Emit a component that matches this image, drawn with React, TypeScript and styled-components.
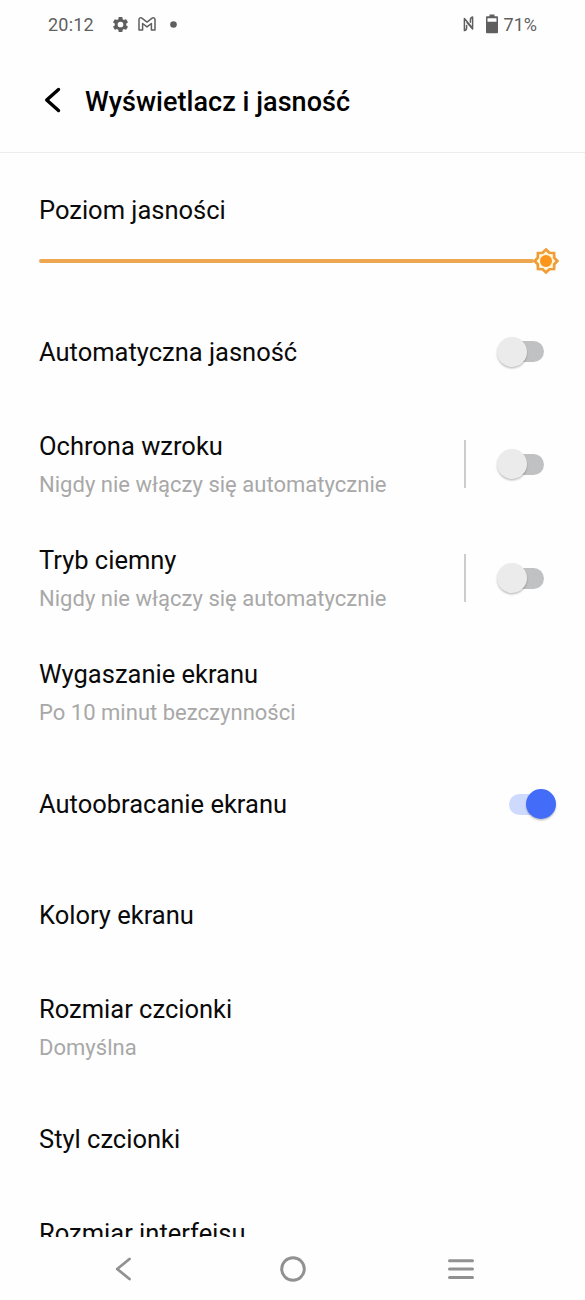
import React from "react";
import styled, { createGlobalStyle } from "styled-components";

const GlobalStyle = createGlobalStyle`
  *, *::before, *::after { box-sizing: border-box; }
  body { margin: 0; background: #fefefe; font-family: Roboto, "Liberation Sans", sans-serif; }
`;

const Screen = styled.div`
  width: 585px;
  height: 1300px;
  display: flex;
  flex-direction: column;
  overflow: hidden;
  background: #fefefe;
  color: #0a0a0a;
`;

const StatusBar = styled.div`
  height: 49px;
  flex: none;
  display: flex;
  align-items: center;
  justify-content: space-between;
  padding: 0 48px;
  color: #5f5f5f;
`;

const StatusGroup = styled.div`
  display: flex;
  align-items: center;
`;

const StatusText = styled.span<{ $spacing?: number; $gap?: number }>`
  margin-left: ${(p) => p.$gap ?? 0}px;
  font-size: 18px;
  line-height: 24px;
  letter-spacing: ${(p) => p.$spacing ?? 0}px;
  white-space: nowrap;
`;

const StatusIcon = styled.svg<{ $gap: number }>`
  display: block;
  flex: none;
  margin-left: ${(p) => p.$gap}px;
  margin-bottom: 1px;
`;

const Header = styled.header`
  height: 104px;
  flex: none;
  display: flex;
  align-items: center;
  padding: 2px 39px 0 43px;
  border-bottom: 1px solid #ececec;
`;

const BackIcon = styled.svg`
  display: block;
  flex: none;
  margin-right: 22px;
  margin-bottom: 3px;
`;

const Heading = styled.h1`
  margin: 0;
  font-size: 27px;
  line-height: 34px;
  font-weight: 500;
  letter-spacing: 0.04px;
  color: #000;
  white-space: nowrap;
`;

const Content = styled.main`
  flex: 1;
  min-height: 0;
  overflow: hidden;
`;

const Brightness = styled.section`
  height: 144px;
  padding: 40px 25px 0 39px;
`;

const Slider = styled.div`
  display: flex;
  align-items: center;
  margin-top: 20px;
`;

const SliderTrack = styled.div`
  flex: 1;
  height: 4px;
  border-radius: 2px;
  background: #eea750;
`;

const SliderThumb = styled.svg`
  display: block;
  flex: none;
  margin-left: -2px;
`;

const Row = styled.div<{ $height: number }>`
  height: ${(p) => p.$height}px;
  display: flex;
  align-items: center;
  padding: 0 29px 0 39px;
`;

const RowText = styled.div`
  flex: 1;
  display: flex;
  flex-direction: column;
  gap: 8px;
  padding-bottom: 2px;
`;

const Title = styled.div`
  font-size: 25.5px;
  line-height: 34px;
  white-space: nowrap;
`;

const Subtitle = styled.div`
  font-size: 22px;
  line-height: 28px;
  letter-spacing: 0.02px;
  color: #a8a8a8;
  white-space: nowrap;
`;

const Divider = styled.div`
  width: 2px;
  height: 48px;
  margin-right: 30px;
  margin-bottom: 2px;
  background: #cbccce;
`;

const Toggle = styled.div<{ $on: boolean }>`
  width: 60px;
  height: 30px;
  display: flex;
  align-items: center;
  justify-content: ${(p) => (p.$on ? "flex-end" : "flex-start")};
  padding: 0 12px 0 12.5px;
  margin-bottom: 2px;
`;

const ToggleTrack = styled.div<{ $on: boolean }>`
  width: 35.5px;
  height: 21px;
  border-radius: 11px;
  display: flex;
  align-items: center;
  justify-content: ${(p) => (p.$on ? "flex-end" : "flex-start")};
  background: ${(p) => (p.$on ? "#cddafd" : "#c0c1c3")};
`;

const ToggleKnob = styled.div<{ $on: boolean }>`
  width: 30px;
  height: 30px;
  flex: none;
  margin: 0 -12px;
  border-radius: 50%;
  background: ${(p) => (p.$on ? "#436df8" : "#ebebeb")};
  box-shadow: 0 1.5px 2px rgba(0, 0, 0, 0.24);
`;

const NavBar = styled.nav`
  height: 63px;
  flex: none;
  display: grid;
  grid-template-columns: repeat(3, 168.5px);
  justify-content: center;
  justify-items: center;
  align-items: center;
`;

const Switch = ({ on = false }: { on?: boolean }) => (
  <Toggle $on={on}>
    <ToggleTrack $on={on}>
      <ToggleKnob $on={on} />
    </ToggleTrack>
  </Toggle>
);

type Setting = {
  title: string;
  subtitle?: string;
  height: number;
  toggle?: "on" | "off";
  divided?: boolean;
};

const settings: Setting[] = [
  { title: "Automatyczna jasność", height: 111, toggle: "off" },
  { title: "Ochrona wzroku", subtitle: "Nigdy nie włączy się automatycznie", height: 114, toggle: "off", divided: true },
  { title: "Tryb ciemny", subtitle: "Nigdy nie włączy się automatycznie", height: 114, toggle: "off", divided: true },
  { title: "Wygaszanie ekranu", subtitle: "Po 10 minut bezczynności", height: 114 },
  { title: "Autoobracanie ekranu", height: 110, toggle: "on" },
  { title: "Kolory ekranu", height: 111 },
  { title: "Rozmiar czcionki", subtitle: "Domyślna", height: 114 },
  { title: "Styl czcionki", height: 110 },
  { title: "Rozmiar interfejsu", subtitle: "Domyślny", height: 114 },
];

const starPoints = Array.from({ length: 16 }, (_, i) => {
  const r = i % 2 === 0 ? 11.4 : 8.9;
  const a = (i * Math.PI) / 8;
  return `${(14 + r * Math.sin(a)).toFixed(2)},${(14 - r * Math.cos(a)).toFixed(2)}`;
}).join(" ");

export default function App() {
  return (
    <>
      <GlobalStyle />
      <Screen>
        <StatusBar>
          <StatusGroup>
            <StatusText $spacing={0.2}>20:12</StatusText>
            <StatusIcon $gap={17} width="19" height="19" viewBox="0 0 24 24" fill="currentColor">
              <path d="M19.14 12.94c.04-.3.06-.61.06-.94 0-.32-.02-.64-.07-.94l2.03-1.58a.49.49 0 0 0 .12-.61l-1.92-3.32a.488.488 0 0 0-.59-.22l-2.39.96c-.5-.38-1.03-.7-1.62-.94l-.36-2.54a.484.484 0 0 0-.48-.41h-3.84c-.24 0-.43.17-.47.41l-.36 2.54c-.59.24-1.13.57-1.62.94l-2.39-.96c-.22-.08-.47 0-.59.22L2.74 8.87c-.12.21-.08.47.12.61l2.03 1.58c-.05.3-.09.63-.09.94s.02.64.07.94l-2.03 1.58a.49.49 0 0 0-.12.61l1.92 3.32c.12.22.37.29.59.22l2.39-.96c.5.38 1.03.7 1.62.94l.36 2.54c.05.24.24.41.48.41h3.84c.24 0 .44-.17.47-.41l.36-2.54c.59-.24 1.13-.56 1.62-.94l2.39.96c.22.08.47 0 .59-.22l1.92-3.32c.12-.22.07-.47-.12-.61l-2.01-1.58zM12 15.6A3.6 3.6 0 1 1 12 8.4a3.6 3.6 0 0 1 0 7.2z" />
            </StatusIcon>
            <StatusIcon $gap={8} width="18" height="14" viewBox="0 0 18 14" fill="none" stroke="currentColor" strokeWidth="1.5" strokeLinejoin="round">
              <path d="M1 2.6C1 .9 2.7.3 3.9 1.2L9 5.1l5.1-3.9C15.3.3 17 .9 17 2.6V13h-3.6V6.5L9 9.9 4.6 6.5V13H1z" />
            </StatusIcon>
            <StatusIcon $gap={14} width="7" height="7" viewBox="0 0 7 7" fill="currentColor">
              <circle cx="3.5" cy="3.5" r="3.3" />
            </StatusIcon>
          </StatusGroup>
          <StatusGroup>
            <StatusIcon $gap={0} width="11" height="16" viewBox="0 0 11 16" fill="none" stroke="currentColor" strokeWidth="1.5" strokeLinejoin="round" strokeLinecap="round">
              <path d="M3.6 9.5v2.2c0 1.6-.6 2.6-2.2 2.9V2.6l7 8.2M7.4 6.2V4c0-1.600.6-2.600 2.200-2.900v12L4 6.600" />
            </StatusIcon>
            <StatusIcon $gap={12} width="12" height="20" viewBox="0 0 12 20">
              <path fill="currentColor" fillRule="evenodd" d="M3.5.5h5v1.7H11a1 1 0 0 1 1 1v15a1 1 0 0 1-1 1H1a1 1 0 0 1-1-1v-15a1 1 0 0 1 1-1h2.5zM1.500 4.300v3.500h9V4.300z" />
            </StatusIcon>
            <StatusText $gap={6}>71%</StatusText>
          </StatusGroup>
        </StatusBar>
        <Header>
          <BackIcon width="20" height="28" viewBox="0 0 20 28" fill="none" stroke="#000" strokeWidth="3.4" strokeLinecap="round" strokeLinejoin="round">
            <path d="M15.500 3.500 3.700 14l11.800 10.500" />
          </BackIcon>
          <Heading>Wyświetlacz i jasność</Heading>
        </Header>
        <Content>
          <Brightness>
            <Title>Poziom jasności</Title>
            <Slider>
              <SliderTrack />
              <SliderThumb width="28" height="28" viewBox="0 0 28 28">
                <polygon points={starPoints} fill="#fff6dc" stroke="#ef9d36" strokeWidth="2.7" />
                <circle cx="14" cy="14" r="6" fill="#fb951c" />
              </SliderThumb>
            </Slider>
          </Brightness>
          {settings.map((s) => (
            <Row key={s.title} $height={s.height}>
              <RowText>
                <Title>{s.title}</Title>
                {s.subtitle && <Subtitle>{s.subtitle}</Subtitle>}
              </RowText>
              {s.divided && <Divider />}
              {s.toggle && <Switch on={s.toggle === "on"} />}
            </Row>
          ))}
        </Content>
        <NavBar>
          <svg width="20" height="26" viewBox="0 0 20 26" fill="none" stroke="#919191" strokeWidth="2.8" strokeLinecap="round" strokeLinejoin="round">
            <path d="M15.500 3 3.200 13l12.300 10" />
          </svg>
          <svg width="26" height="26" viewBox="0 0 26 26" fill="none" stroke="#919191" strokeWidth="3">
            <circle cx="13" cy="13" r="11.3" />
          </svg>
          <svg width="28" height="26" viewBox="0 0 28 26" fill="none" stroke="#919191" strokeWidth="3" strokeLinecap="round">
            <path d="M2.500 4.800h23M2.500 13h23M2.500 21.400h23" />
          </svg>
        </NavBar>
      </Screen>
    </>
  );
}
